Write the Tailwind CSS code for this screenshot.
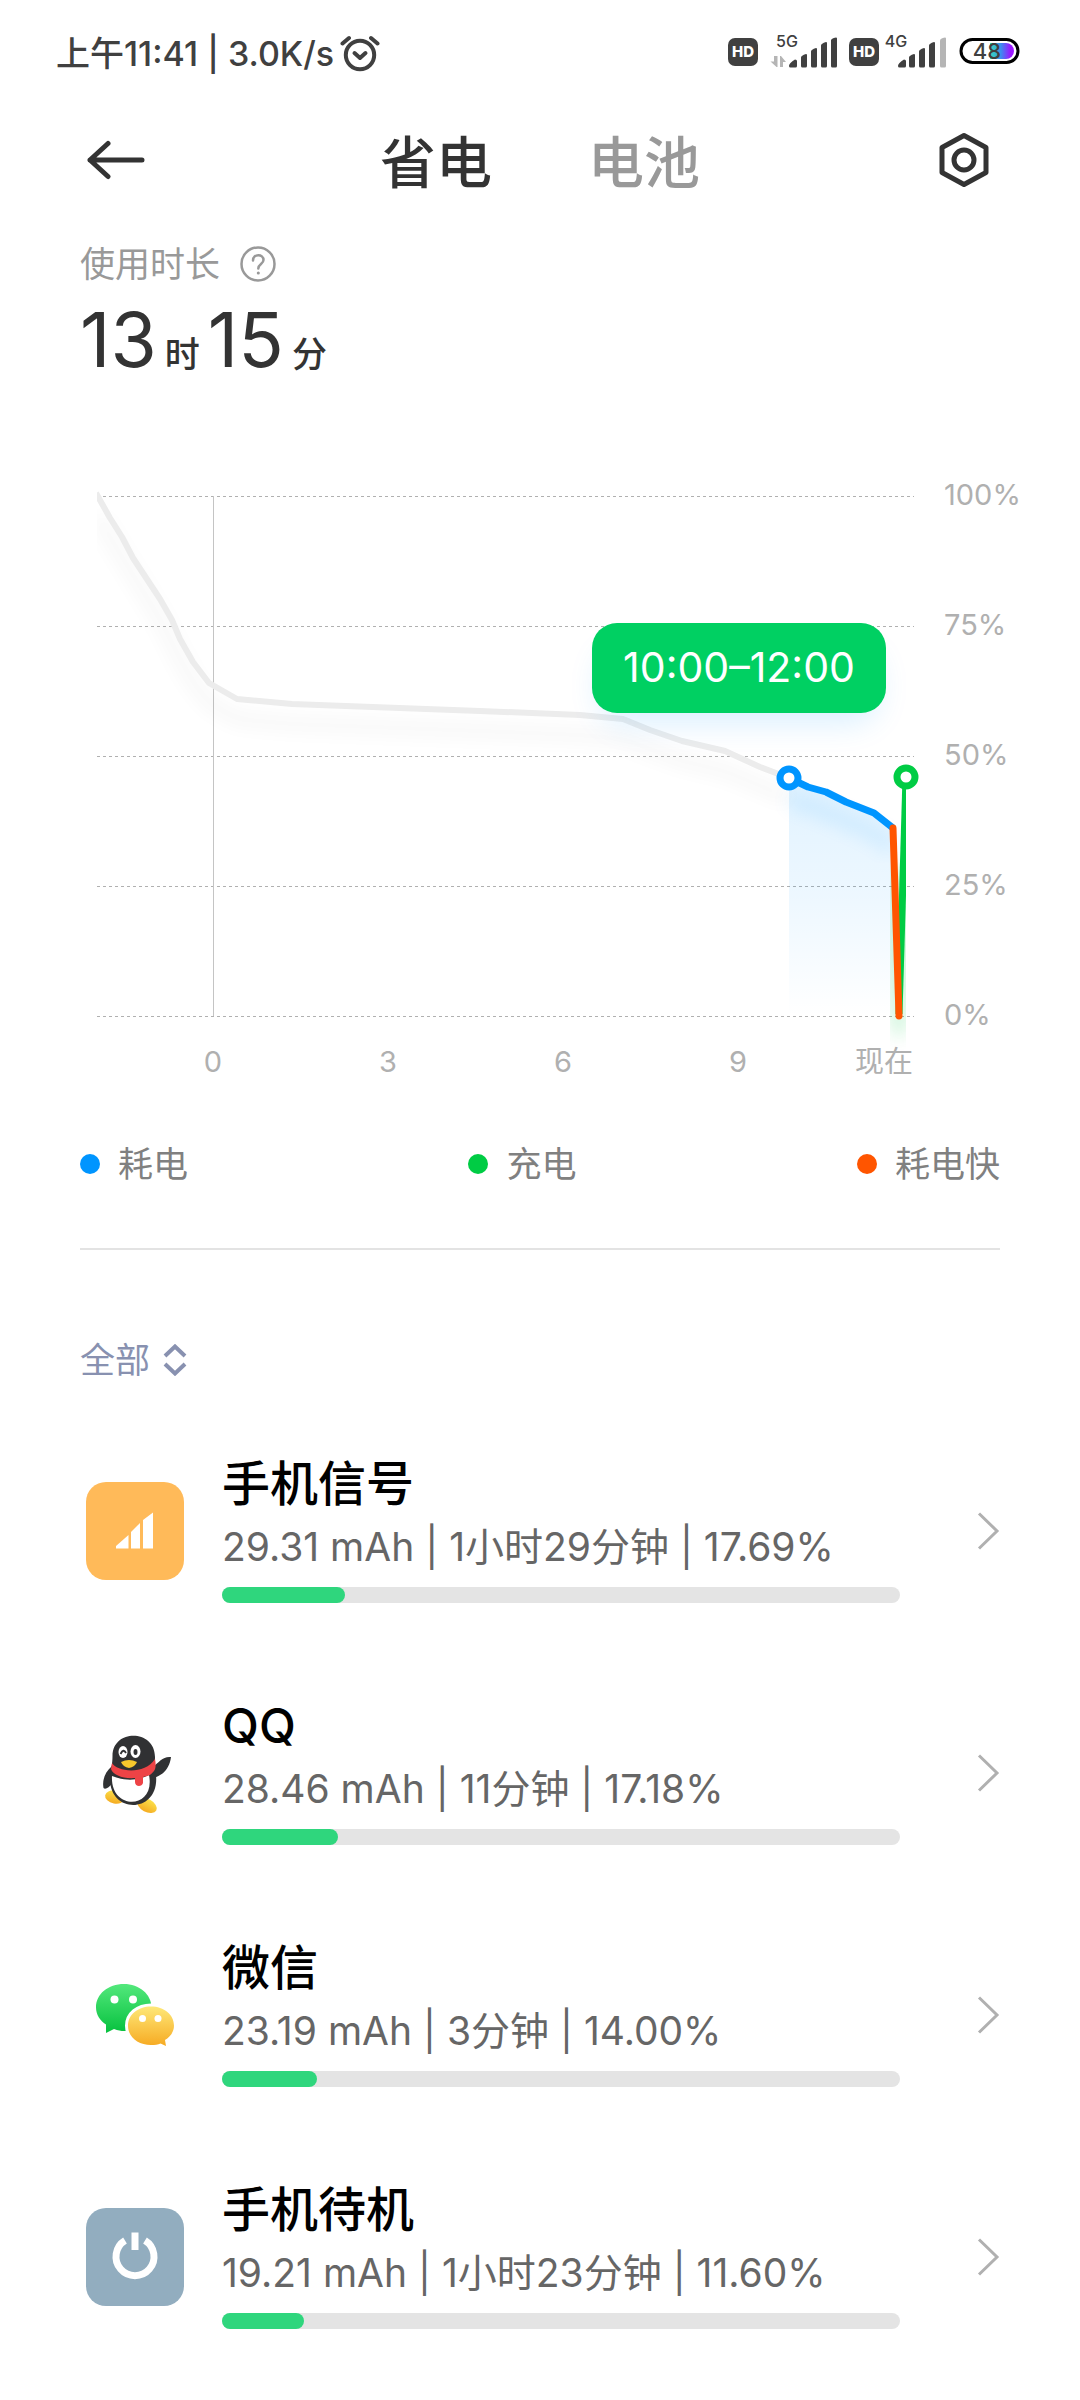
<!DOCTYPE html>
<html lang="zh-CN">
<head>
<meta charset="utf-8">
<meta name="viewport" content="width=device-width, initial-scale=1">
<title>省电与电池</title>
<script src="https://cdn.jsdelivr.net/npm/@tailwindcss/browser@4"></script>
</head>
<body class="bg-white font-['Inter','Noto_Sans_CJK_SC',sans-serif] text-[#333333] overflow-x-hidden">

<!-- status bar -->
<div class="flex h-26 items-center justify-between pl-14 pr-15 text-[#404040]">
  <div class="flex items-center gap-1.5 pt-1">
    <span class="text-[34px] font-medium leading-10 whitespace-nowrap">上午11:41 | 3.0K/s</span>
    <svg class="h-10 w-10" viewBox="0 0 40 40" fill="none" stroke="#404040" stroke-linecap="round" stroke-linejoin="round" aria-label="闹钟">
      <circle cx="20" cy="21" r="14.2" stroke-width="4"/>
      <path d="M14.5 19l5.5 5 5.500-5" stroke-width="4"/>
      <path d="M2.500 9.500L9 4M37.500 9.500L31 4" stroke-width="4"/>
    </svg>
  </div>
  <svg class="h-14 w-[294px] overflow-visible" viewBox="726 24 294 56" aria-label="信号与电量">
    <defs>
      <linearGradient id="bat" x1="0" x2="1"><stop offset="0" stop-color="#35e0b8"/><stop offset=".45" stop-color="#3b8df0"/><stop offset=".85" stop-color="#9a18ff"/></linearGradient>
    </defs>
    <g font-family="Inter, sans-serif" fill="#404040">
      <rect x="728" y="38" width="30" height="28" rx="7"/>
      <rect x="849" y="38" width="30" height="28" rx="7"/>
      <text x="743" y="57" font-size="15" font-weight="800" text-anchor="middle" fill="#fff">HD</text>
      <text x="864" y="57" font-size="15" font-weight="800" text-anchor="middle" fill="#fff">HD</text>
      <text x="787" y="47" font-size="16" font-weight="500" text-anchor="middle">5G</text>
      <text x="896" y="47" font-size="16" font-weight="500" text-anchor="middle">4G</text>
      <path fill="#b5b5b5" d="M774 56h3.500v11h-1l-6-5.500h3.500zM780 67V56h1l5 6h-3v5z"/>
      <path d="M789 66q0-3 6-6.500q2 0 2 1.500v5q0 1.500-1.500 1.500h-5q-1.500 0-1.500-1.500zM801 57.500q0-2 5-3.500q1 0 1 1v11q0 1.500-1.500 1.500h-3q-1.500 0-1.500-1.500zM811 51.500q0-2 5-3.500q1 0 1 1v17q0 1.500-1.500 1.500h-3q-1.500 0-1.500-1.500zM821 45.500q0-2 5-3.500q1 0 1 1v23q0 1.500-1.500 1.500h-3q-1.500 0-1.500-1.500zM831 40.500q0-2 5-3q1 0 1 1v27.500q0 1.500-1.500 1.500h-3q-1.500 0-1.500-1.500z"/>
      <path d="M898 66q0-3 6-6.500q2 0 2 1.500v5q0 1.500-1.500 1.500h-5q-1.500 0-1.500-1.500zM909 57.500q0-2 5-3.500q1 0 1 1v11q0 1.500-1.500 1.500h-3q-1.500 0-1.500-1.500zM919 51.500q0-2 5-3.500q1 0 1 1v17q0 1.500-1.500 1.500h-3q-1.500 0-1.500-1.500zM929 45.500q0-2 5-3.500q1 0 1 1v23q0 1.500-1.500 1.500h-3q-1.500 0-1.500-1.500z"/>
      <path fill="#b5b5b5" d="M940 40.500q0-2 5-3q1 0 1 1v27.500q0 1.500-1.500 1.500h-3q-1.500 0-1.500-1.500z"/>
      <rect x="961" y="39.500" width="57" height="23" rx="11.500" fill="#fff" stroke="#000" stroke-width="3"/>
      <path d="M990 43h16a8 8 0 0 1 0 16h-16z" fill="url(#bat)"/>
      <text x="987" y="59" font-size="22" font-weight="500" text-anchor="middle">48</text>
    </g>
  </svg>
</div>

<!-- title bar -->
<header class="flex h-28 items-center justify-between px-20">
  <button class="flex w-20 items-center justify-start pl-1.5" aria-label="返回">
    <svg class="h-10 w-16" viewBox="0 0 64 40" fill="none" stroke="#333333" stroke-width="5" stroke-linecap="round" stroke-linejoin="round"><path d="M56 20H4M22 3.500L4 20l18 16.500"/></svg>
  </button>
  <nav class="flex gap-24 pt-1.5 text-[56px] leading-[72px] font-medium">
    <button>省电</button>
    <button class="text-[#999999]">电池</button>
  </nav>
  <button class="flex w-20 items-center justify-end pr-2" aria-label="设置">
    <svg class="h-14 w-14" viewBox="0 0 56 56" fill="none" stroke="#333333" stroke-width="5" stroke-linejoin="round"><path d="M28 3.500L50 15.500v25L28 52.500L6 40.500v-25z"/><circle cx="28" cy="28" r="10"/></svg>
  </button>
</header>

<main>
  <!-- usage time -->
  <section class="px-20 pt-6">
    <div class="flex h-12 items-center gap-5 text-[35px] leading-12 text-[#999999]">
      <span>使用时长</span>
      <button aria-label="说明">
        <svg class="h-9 w-9" viewBox="0 0 36 36" fill="none" stroke="#999999" stroke-width="2.500" stroke-linecap="round"><circle cx="18" cy="18" r="16.500"/><path d="M13 14.500c0-7 10.500-7 10.500-.5c0 4-5.200 4-5.200 8.500"/><circle cx="18.300" cy="27" r=".8" fill="#999999" stroke-width="1.500"/></svg>
      </button>
    </div>
    <p class="mt-1 flex items-baseline gap-2 text-[35px] leading-24 font-medium"><span class="text-[75px] font-normal">13</span>时<span class="text-[75px] font-normal">15</span>分</p>
  </section>

  <!-- battery level chart -->
  <svg class="mt-9 block h-auto w-full" viewBox="0 439 1080 660" role="img" aria-label="电量曲线">
    <defs>
      <linearGradient id="area" x1="0" x2="0" y1="779" y2="1017" gradientUnits="userSpaceOnUse"><stop offset="0" stop-color="#0095ff" stop-opacity=".12"/><stop offset=".5" stop-color="#0095ff" stop-opacity=".07"/><stop offset="1" stop-color="#0095ff" stop-opacity="0"/></linearGradient>
      <filter id="soft" x="-20%" y="-20%" width="140%" height="150%"><feGaussianBlur stdDeviation="9"/></filter>
      <filter id="wide" x="-20%" y="-50%" width="140%" height="220%"><feGaussianBlur stdDeviation="16"/></filter>
      <clipPath id="plot"><rect x="97" y="440" width="809" height="640"/></clipPath>
    </defs>
    <g stroke="#b0b0b0" stroke-width="1" stroke-dasharray="3 3">
      <path d="M97 497.500H914M97 627.500H914M97 757.500H914M97 887.500H914M97 1017.500H914"/>
    </g>
    <path d="M213.500 497V1017" stroke="#c4c4c4"/>
    <g clip-path="url(#plot)" fill="none" stroke-linejoin="round">
      <path filter="url(#soft)" opacity=".026" stroke="#000" stroke-width="16" d="M98 518L122 558L160 620L180 660L193 683L209 704L237 720L292 725L480 732L580 736L623 740L682 762L725 772L789 799"/>
      <path filter="url(#soft)" opacity=".1" stroke="#0095ff" stroke-width="16" d="M789 799L826 813L874 834L893 849"/>
      <path filter="url(#soft)" opacity=".3" stroke="#00cc44" stroke-width="9" d="M893 870L899 1032L908 870"/>
      <path fill="url(#area)" d="M789 779L808 788L826 793L846 803L874 814L893 829L899 1017H789z"/>
      <path stroke="#ececec" stroke-width="6" d="M96 494L110 519L122 538L133 559L160 600L172 621L180 640L193 663L209 684L237 700L292 705L480 712L580 716L623 720L650 731L682 742L725 752L760 768L789 779"/>
      <path stroke="#0095ff" stroke-width="7" d="M789 779L808 788L826 793L846 803L874 814L893 829"/>
      <path stroke="#00cc44" stroke-width="7" d="M899 1015L906 778"/>
      <path stroke="#ff5500" stroke-width="7" stroke-linecap="round" d="M893 829L899 1017"/>
    </g>
    <circle cx="789" cy="779" r="9" fill="#fff" stroke="#0095ff" stroke-width="7"/>
    <circle cx="906" cy="778" r="9" fill="#fff" stroke="#00cc44" stroke-width="7"/>
    <rect x="600" y="650" width="278" height="74" rx="26" fill="#0095ff" opacity=".15" filter="url(#wide)"/>
    <rect x="592" y="624" width="294" height="90" rx="25" fill="#00d062"/>
    <g font-family="Inter, 'Noto Sans CJK SC', sans-serif">
      <text x="739" y="683" font-size="41" text-anchor="middle" fill="#fff">10:00–12:00</text>
      <g font-size="29" fill="#b0b0b0">
        <text x="944" y="506">100%</text>
        <text x="944" y="636">75%</text>
        <text x="944" y="766">50%</text>
        <text x="944" y="896">25%</text>
        <text x="944" y="1026">0%</text>
        <g text-anchor="middle">
          <text x="213" y="1073">0</text>
          <text x="388" y="1073">3</text>
          <text x="563" y="1073">6</text>
          <text x="738" y="1073">9</text>
          <text x="884" y="1073">现在</text>
        </g>
      </g>
    </g>
  </svg>

  <div class="px-20">
    <ul class="mt-10 flex justify-between text-[35px] leading-[52px] text-[#808080]">
      <li class="flex items-center gap-[18px]"><span class="h-5 w-5 rounded-full bg-[#0095ff]"></span>耗电</li>
      <li class="flex items-center gap-[18px]"><span class="h-5 w-5 rounded-full bg-[#00cc44]"></span>充电</li>
      <li class="flex items-center gap-[18px]"><span class="h-5 w-5 rounded-full bg-[#ff5500]"></span>耗电快</li>
    </ul>
    <hr class="mt-[58px] border-t-2 border-[#e3e3e3]">

    <div class="mt-[86px] flex h-12 items-center gap-3 text-[#8891b0]">
      <select aria-label="筛选" class="appearance-none bg-transparent text-[35px] leading-12 outline-none">
        <option>全部</option>
      </select>
      <svg class="pointer-events-none h-8 w-6" viewBox="0 0 24 32" fill="none" stroke="#8891b0" stroke-width="4"><path d="M2 12L12 2.500L22 12M2 20l10 9.500L22 20"/></svg>
    </div>

    <ul class="mt-[75px] flex flex-col gap-[98px] pb-16">
      <li><a href="#signal" class="flex items-center">
        <svg class="ml-1.5 mr-[38px] h-[98px] w-[98px] shrink-0" viewBox="0 0 98 98"><rect width="98" height="98" rx="20" fill="#ffba59"/><path fill="#fff" d="M30 66.500V64L42.500 53v13.500zM45 66.500V50l9-9v25.500zM57 66.500V38L67 30.500v36z"/></svg>
        <div class="min-w-0 flex-1">
          <h2 class="text-[48px] leading-[50px] font-medium text-black">手机信号</h2>
          <p class="mt-3 text-[39px] leading-[52px] whitespace-nowrap text-[#666666]">29.31 mAh | 1小时29分钟 | 17.69%</p>
          <div class="mt-3.5 h-4 rounded-full bg-[#e4e4e4]"><div class="h-4 rounded-full bg-[#2fd67d]" style="width:18.1%"></div></div>
        </div>
        <svg class="ml-[76px] h-10 w-6 shrink-0" viewBox="0 0 24 40" fill="none" stroke="#b0b0b0" stroke-width="3"><path d="M3 2.500L21 20L3 37.500"/></svg>
      </a></li>
      <li><a href="#qq" class="flex items-center">
        <svg class="ml-1.5 mr-[38px] h-[98px] w-[98px] shrink-0" viewBox="0 0 98 98">
          <defs><linearGradient id="foot" x1="0" x2="0" y1="0" y2="1"><stop offset="0" stop-color="#fbe04a"/><stop offset="1" stop-color="#f5ac22"/></linearGradient></defs>
          <ellipse cx="29" cy="73" rx="10" ry="6.500" fill="url(#foot)" transform="rotate(10 29 73)"/>
          <ellipse cx="61" cy="81.500" rx="10.500" ry="6.500" fill="url(#foot)" transform="rotate(28 61 81.500)"/>
          <g transform="translate(0 8)">
            <path fill="#303133" d="M26 34C19 40 16 48 17.500 56c2 2 6-1 8-4zM61 46c10 1 22-5 24-21-8-1-12 5-18 10z"/>
            <path fill="#303133" d="M26.500 24C26.500-3 69-3 69 25c0 8-1 11 1 18C74 82 23 83 24 46c1-10 2.500-14 2.500-22z"/>
            <path fill="#fff" d="M26 44c12 5 26 5 37-1 7 35-39 36-37 1z"/>
            <path fill="#ee4346" d="M26 31c5 9 33 12 43-4 1 5 1 9-1 12-3 4-6 5-11 6v6c-1 4-8 4-8-1v-4c-12 1-22-3-24-9z"/>
            <ellipse cx="37" cy="20" rx="4.500" ry="6" fill="#fff"/><ellipse cx="49.500" cy="19.500" rx="5" ry="6.500" fill="#fff"/>
            <path d="M34.500 22q3-6 5.500-1" fill="none" stroke="#303133" stroke-width="1.800"/><ellipse cx="49.500" cy="20" rx="2" ry="3" fill="#303133"/>
            <path fill="#f8c82c" d="M35 30q8-4 16 0q-2 5-8 6q-6-1-8-6z"/>
          </g>
        </svg>
        <div class="min-w-0 flex-1">
          <h2 class="text-[48px] leading-[50px] font-medium text-black">QQ</h2>
          <p class="mt-3 text-[39px] leading-[52px] whitespace-nowrap text-[#666666]">28.46 mAh | 11分钟 | 17.18%</p>
          <div class="mt-3.5 h-4 rounded-full bg-[#e4e4e4]"><div class="h-4 rounded-full bg-[#2fd67d]" style="width:17.1%"></div></div>
        </div>
        <svg class="ml-[76px] h-10 w-6 shrink-0" viewBox="0 0 24 40" fill="none" stroke="#b0b0b0" stroke-width="3"><path d="M3 2.500L21 20L3 37.500"/></svg>
      </a></li>
      <li><a href="#wechat" class="flex items-center">
        <svg class="ml-1.5 mr-[38px] h-[98px] w-[98px] shrink-0" viewBox="0 0 98 98">
          <defs>
            <linearGradient id="wg" x1="0" x2="0" y1="0" y2="1"><stop offset="0" stop-color="#53e87c"/><stop offset="1" stop-color="#06c13e"/></linearGradient>
            <linearGradient id="wy" x1="0" x2="0" y1="0" y2="1"><stop offset="0" stop-color="#fee878"/><stop offset="1" stop-color="#f6aa22"/></linearGradient>
          </defs>
          <path fill="url(#wg)" d="M38 18C22 18 10 28 10 41.500c0 7 4 13 10 17V67l8-4c4 1.500 7 2 10 2 15 0 27.500-10 27.500-23.500S53 18 38 18z"/>
          <path fill="url(#wy)" stroke="#fff" stroke-width="6" paint-order="stroke" d="M65 40.500c-13 0-23 8-23 19.300S52 79 65 79c4 0 7-.5 9.500-1.500L80 80l-1-6c5-3 9-8 9-14.200C88 48.500 78 40.500 65 40.500z"/>
          <g fill="#fff"><circle cx="28.500" cy="33.500" r="4"/><circle cx="47" cy="33.500" r="4"/><circle cx="56.500" cy="52.500" r="3.500"/><circle cx="72" cy="52.500" r="3.500"/></g>
        </svg>
        <div class="min-w-0 flex-1">
          <h2 class="text-[48px] leading-[50px] font-medium text-black">微信</h2>
          <p class="mt-3 text-[39px] leading-[52px] whitespace-nowrap text-[#666666]">23.19 mAh | 3分钟 | 14.00%</p>
          <div class="mt-3.5 h-4 rounded-full bg-[#e4e4e4]"><div class="h-4 rounded-full bg-[#2fd67d]" style="width:14%"></div></div>
        </div>
        <svg class="ml-[76px] h-10 w-6 shrink-0" viewBox="0 0 24 40" fill="none" stroke="#b0b0b0" stroke-width="3"><path d="M3 2.500L21 20L3 37.500"/></svg>
      </a></li>
      <li><a href="#standby" class="flex items-center">
        <svg class="ml-1.5 mr-[38px] h-[98px] w-[98px] shrink-0" viewBox="0 0 98 98" fill="none"><rect width="98" height="98" rx="20" fill="#92adbf"/><path stroke="#fff" stroke-width="7" d="M39 32.500A19 19 0 1 0 59 32.500M49 24.500v17.500"/></svg>
        <div class="min-w-0 flex-1">
          <h2 class="text-[48px] leading-[50px] font-medium text-black">手机待机</h2>
          <p class="mt-3 text-[39px] leading-[52px] whitespace-nowrap text-[#666666]">19.21 mAh | 1小时23分钟 | 11.60%</p>
          <div class="mt-3.5 h-4 rounded-full bg-[#e4e4e4]"><div class="h-4 rounded-full bg-[#2fd67d]" style="width:12.1%"></div></div>
        </div>
        <svg class="ml-[76px] h-10 w-6 shrink-0" viewBox="0 0 24 40" fill="none" stroke="#b0b0b0" stroke-width="3"><path d="M3 2.500L21 20L3 37.500"/></svg>
      </a></li>
    </ul>
  </div>
</main>
</body>
</html>
